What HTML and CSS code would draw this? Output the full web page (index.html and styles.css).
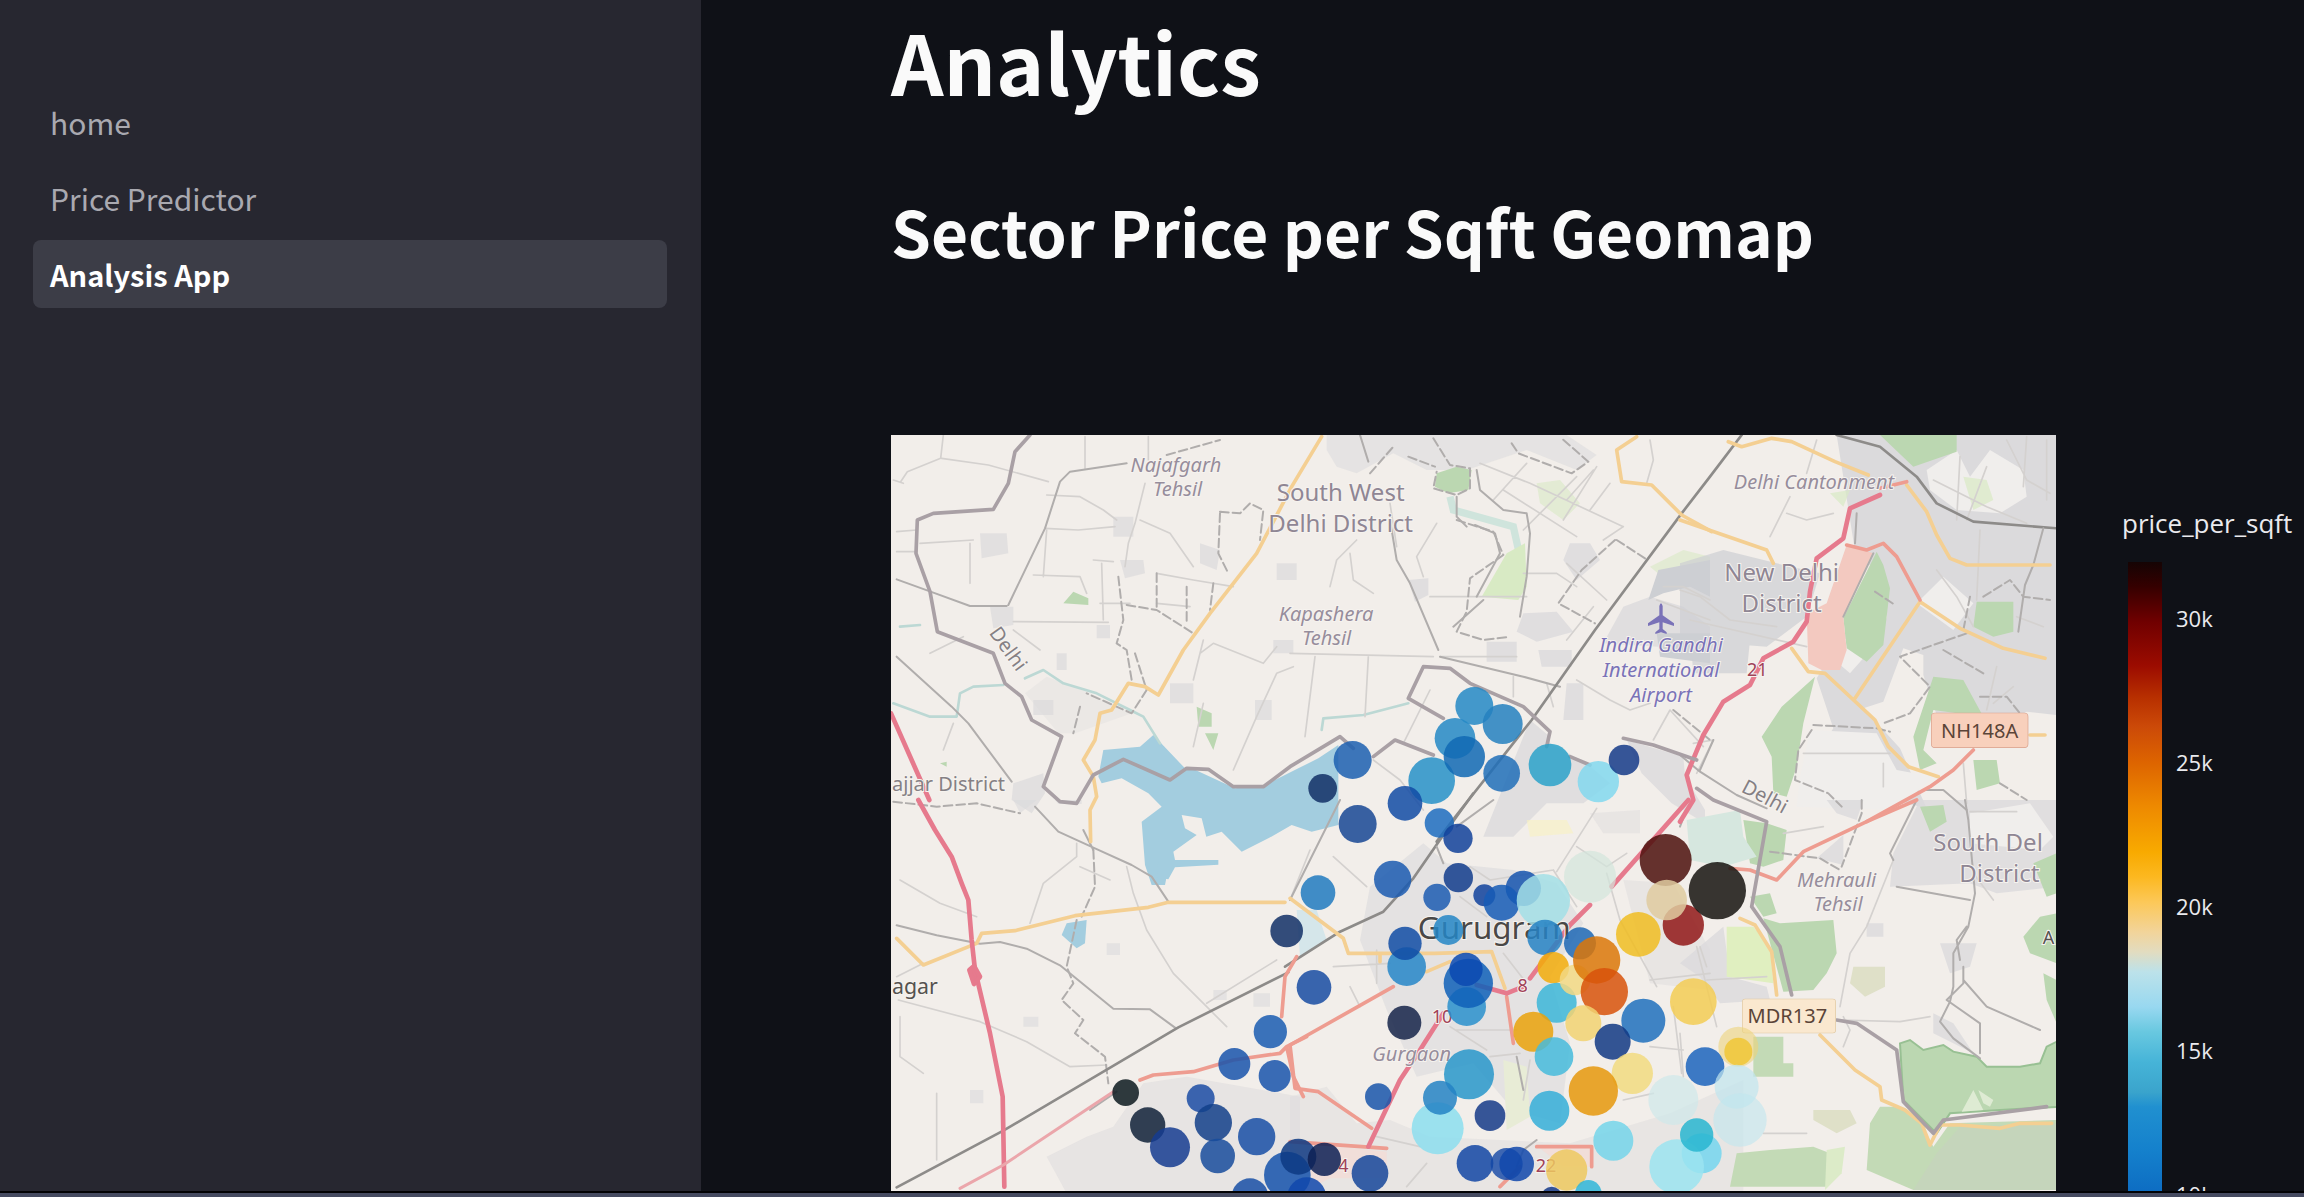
FILE: index.html
```html
<!DOCTYPE html>
<html lang="en">
<head>
<meta charset="utf-8">
<title>Analysis App</title>
<link rel="stylesheet" href="styles.css">
</head>
<body>
<div class="app">
  <nav class="sidebar">
    <a class="nav-link" href="#home">home</a>
    <a class="nav-link" href="#price">Price Predictor</a>
    <a class="nav-link active" href="#analysis" aria-current="page">Analysis App</a>
  </nav>
  <main class="main">
    <h1 class="title">Analytics</h1>
    <h2 class="subtitle">Sector Price per Sqft Geomap</h2>
    <section class="plot">
      <svg class="map" viewBox="0 0 3495 2268" role="img" aria-label="Sector price map of Gurugram">
        <rect width="3495" height="2268" fill="#f2eeea"/>
        <!-- land use: north west -->
        <g transform="translate(-33 -45)">
          <g class="urban">
            <path d="M300 340l80 0 5 60-80 15zM330 560h70v55l-60 10zM700 290h60v60h-60zM720 420l70 0 5 40-60 15zM960 370l60 20-10 60-50-20zM870 790h70v60h-70zM1180 660h60v40h-60zM1125 840h50v60h-50zM1190 430h60v50h-60zM530 700h30v50h-30zM650 615h40v40h-40zM460 840h60v45h-60zM400 1090l90-30 5 60-40 60-60-40z" opacity=".7"/>
            <path d="M500 770l120 45 135 65-170 60-50 0-100-120z" opacity=".3"/>
          </g>
          <path class="wood" d="M550 550l30-35 45 20v20zM950 860l45 20v40h-40zM975 940l40 0-15 50zM180 1030l20-5v15z"/>
          <path class="water" d="M670 990l110-10 40-35 95 100 20 0 130 60 90-10 100-50 60-30 60-40v240l-80 20-60-20-70 40-80 40-60-60-60 20-60 70-40 20-10 50-40 0-20-60-10-130 60-45-40-40-80-45-60 15-10-20z"/>
          <path class="stream" d="M435 775l55-25 60 40 100 30 100 50 40 20 50 80M370 795l-90 5-40 20-10 70-80 0-110-40M60 620l60-5"/>
        </g>
        <!-- land use: north centre -->
        <g transform="translate(1197 -45)">
          <g class="urban">
            <path d="M110 45h720l90 60-60 45-150-60-180 60-120 0-100-50-110 60-60-20-30-50z" opacity=".55"/>
            <path d="M840 370l60 0 30 50-70 60-40-60zM700 580l100-5 50 60-110 30-60-30zM590 665h90v60h-90zM745 690h100v50h-90zM830 790h50v110h-60zM355 480l60-5v50l-40 20zM720 900l60 50 0 20 110 60 70 60-80 60-110 0-100 100-90 0zM1010 960l170 50 5 60 60 100 0 40-100-60-90-90zM1000 560l80-30 100 30 80 60v70l-320-20z" opacity=".8"/>
          </g>
          <path d="M480 230l10 40 180 50 20 90-50 60" fill="none" stroke="#cfe4dc" stroke-width="22"/>
          <path class="grass" d="M650 400l55-30 5 130-25 40-110-10z"/>
          <path class="wood" d="M440 160l60-20 45 10-10 60-60 10-40-20z"/>
          <path class="grass" d="M740 190l70-10 60 70-50 50-70-50zM1080 440l100-50 80 20v30l-150 25z" opacity=".6"/>
          <path class="runway" d="M1075 540l30-90 155-30v110l-60-30-80 20zM1100 640h160v90l-150-20z"/>
          <path class="stream" d="M95 930l5-35 120-10 135-35"/>
        </g>
        <!-- land use: north east -->
        <g transform="translate(2367 -45)">
          <path class="urban" d="M470 45h660v840l-90-10-80 40-190-30-40-120 0-60-60-20-60 160-60 20 110 120 80 180-80-20-200-130-50-10 50-80-50-150 80-130 130-50-10-150-80-20z"/>
          <path class="runway" d="M0 430l130-40 160 40 130 30-40 130-120 90-260-20zM30 640l180 20-10 100-160 0z" opacity=".7"/>
          <path class="plain" d="M740 150l90-60 40 80 60-80 100 60 10 80-80 50-130-10-80-60zM790 470l90 80-60 80-110-80zM440 700l70 60 80-90-20-70zM390 930l200 10 60 110 110 20-110 100-300-10 10-90z"/>
          <path class="wood" d="M600 45h230v50l-130 45zM890 545h110v90l-60 15-60-30zM590 395l-100 200 10 90 60 40 50-50 20-170-20-70zM405 770l-100 90-60 90 30 60 5 110 40 10 30-90 20-130zM760 770l90 10 60 110-150-20-30 120 40 40-50 20-20-100zM880 1020l70 0 10 70-70 20z"/>
          <path class="grass" d="M450 220l60-10-20 50zM850 170l70 10 20 60-60 30z" opacity=".7"/>
          <path d="M500 375l80 25-90 190 10 100-20 60-55 0-40-20-5-150 60-30z" fill="#f3c9c0"/>
        </g>
        <!-- land use: south west -->
        <g transform="translate(-33 1095)">
          <path class="water" d="M560 370l60-10-5 70-25 15-45-40z"/>
          <path d="M905 45l60 10 15 60-30 30-60 60-10-50 70-50-35-20zM890 200l-5-20 140-60 10 50-10 60-140 40z" fill="#f2eeea"/>
          <path class="water" d="M835 180l180 0 0 14-130 8-20 36-35-5z"/>
          <g class="urban">
            <path d="M680 430h40v35h-40zM1000 570h40v30h-40zM1120 580h50v40h-50zM430 650h45v30h-45zM270 870h40v40h-40zM400 0h70l-50 40zM525 0h80v12h-70z" opacity=".6"/>
            <path d="M790 850l130-20 340 60v290H560l-60-110 120-60 80-30z" opacity=".5"/>
          </g>
        </g>
        <!-- land use: south centre -->
        <g transform="translate(1197 1095)">
          <g class="urban">
            <path d="M400 130l70 60 200 20 130 40 80 120-100 160 60 200-30 240-140-40-120-140-170 40-90-200-80-210 30-160z" opacity=".6"/>
            <path d="M0 890l110-30 90 110 100-10 120 50 420 20 300-90 220-100v340H0zM900 40l150-10v70h-110zM1000 240l150 10 110 200v120l-180-20z" opacity=".45"/>
          </g>
          <path d="M20 330l60 0 30 90-80 50z" fill="#d5e6ea"/>
          <path d="M710 60h120l20 40-130 10z" fill="#f8f1c0" opacity=".6"/>
          <path d="M0 1025l290 30v80H120l-40 20zM750 1045l150-5v60h-80z" fill="#f6d8d2" opacity=".6"/>
          <path d="M640 780l70 20 10 150-70 40z" fill="#e8ecd6"/>
        </g>
        <!-- land use: south east -->
        <g transform="translate(2367 1095)">
          <g class="urban">
            <path d="M720 0h410v260l-180 20-80-30-240 10 10-100zM440 0h110l-20 60-60-20zM410 175l80-70 0 90zM780 430h110l-20 70-60 20zM560 370h50v40h-50zM760 640l60 30 60 90-120-60zM0 490l130-110 20 150 110 30 10 40-150 10-60-80z" opacity=".8"/>
          </g>
          <path class="plain" d="M870 40l180-30 70 100-40 40-210-20z"/>
          <path class="wood" d="M190 60l70 10 60 20-10 90-60 20-40-10zM300 370l160-10 10 100-30 60-40 50-90 5-60-220zM210 290l60-10 20 60-40 10zM720 20l70-5 10 50-50 30zM1130 340l-50 10-50 60 20 50 80 30zM1130 160l-70 30 40 100 30-10zM1090 520l40 20v130l-30-70z"/>
          <path d="M170 1060l100-10 130-10 50 20-10 100H150zM600 920l60 0 70 60 30 60 50-70 320-10v210H700l-140-60 10-140zM220 710h90v80h30v40H220z" fill="#c3dab6"/>
          <path d="M840 980l290-10v200H700l70-110z" fill="#c5d5bb"/>
          <path d="M660 730l30-10 40 30 60-15 30 20 70 15 30 30 100 0 60-10 20-50 40-20v200l-180 10-150 10-40 60-50-50-50-50z" class="wood" stroke="#98c093" stroke-width="6"/>
          <path d="M845 935l35-65 30 60zM895 870l45 30-10 20-20-10z" fill="#deebd3"/>
          <path d="M140 380l80 0 50 60 10 110-140-20z" fill="#e0efc0"/>
          <path d="M520 500h95v60l-60 30-45-40zM400 930l110 0 20 40-60 30-70-40z" fill="#dfe0c8"/>
          <path d="M20 60l160-30 10 80 40 60-100 30-100-20z" fill="#d6e7df"/>
          <path d="M440 1050l55-10-10 80-50 50z" fill="#dcebc8"/>
        </g>

        <!-- minor roads -->
        <g class="minor">
          <g transform="translate(-33 -45)">
            <path d="M190 45l-8 70-100 40-20 30M185 115l140 20 180 50M615 50v95M805 50v70M795 190l-30 120-20 60-10 70M500 225l100 5 70 40 40 30M495 325l100 5 110-10M460 465l140 5 20 50M665 430l5 170M640 420l60 5M830 460l110 20 120 20M400 605l285 2M660 550l90 0M830 550l100 10M50 395l60 0M50 335l60-5M120 370l160-10M270 370v120M150 700l100-50M400 630l80 60M960 700l40-30 150 60 40-50M940 780l30-120M1060 1050l70-160 60-130 50-20M970 850l-30 130M780 300l90 40 70 100M500 330l-10 140M40 180l30 10M190 990l30-80"/>
          </g>
          <g transform="translate(1197 -45)">
            <path d="M420 530h290M0 700l430 10M75 710l-30 240M235 710l-10 180M300 250l20 130M180 400l10 80 60 40M120 500l20-80 60-60M400 470l-20-60 60-100M610 240l100-110M700 330l160-160M640 210l220 140M820 300l100-160M830 240l80-90M900 270l60-80M940 360l60-40M700 460h100l60 40M830 430l120 110M830 660l80-100M570 130l150 60 280 130M860 780l100 60 60 30 60-20M1090 960l50-90 100 110M340 970l80-160M250 1020l80 60 70 90M1100 540l160 60M1120 500l60 0 80 40M450 710l230 0M670 770v60M790 860l-20-70M1080 60l10 60-20 70"/>
          </g>
          <g transform="translate(2367 -45)">
            <path d="M0 510l60 20 90 70 140 20M30 600l350 80M320 280l60 20 80-20M410 60l-30 100M270 350l60-120M40 970l60-10-50 100M370 1000h260M610 1030v70M860 1150l-10-120M840 110l-10 190M920 140l-60 160M760 180l160 80 120 50M980 60l60 120 70 40M1040 50l-10 150M900 330l-10 210M770 450l60 80 50 90M1000 800l-60 50M1100 60v180M1090 620l-80-30M950 740l-30 130"/>
          </g>
          <g transform="translate(-33 1095)">
            <path d="M55 600l245 65 140 60 130 75 110-5M590 130l0 40-100 80-40 120M740 200l20 80 40 110 80 130 100 100 60 60M1190 480l-210 130M60 650v120l70 50M170 880v200M60 240l120 70 110 40M50 530l80-40M600 200l90 40"/>
          </g>
          <g transform="translate(1197 1095)">
            <path d="M60 150l-60 150M130 170l100 90M540 200l60 40 190-30M800 215l120-190M790 210l70 110M860 140l90 60 60-40M510 290l80 60M640 460l70 90M260 450v100M130 500l170-10M180 560l30 60M480 680l110 70M500 690l180 0M600 770l90-10M1080 540l180-20M1150 620l25 200M1000 900l90-20M1080 740l100 10M700 900l20-120M260 1010l130 30M1230 440l20 60M950 220l40 140 110 200M350 1160l60-70"/>
          </g>
          <g transform="translate(2367 1095)">
            <path d="M640 180l-80 200-50 80-30 160M480 660l180 5 90-15M50 440l60 240M80 540l180-10M250 1000h130M870 35h140M310 100l120-20M0 700l10 130M940 300l-60-80M490 650l20 40-20 50"/>
          </g>
        </g>
        <!-- grey through roads and railways -->
        <g class="grey">
          <g transform="translate(-33 -45)">
            <path d="M740 130l-170 25-30 30-45 140-110 230M50 478l110 40 110 40 110 0M50 710l165 150 50 50 130 175"/>
            <path class="dash" d="M860 105l160-45M715 470l15 130-20 70 30 20 15 90M740 555l90 15 110 70M920 500v110M830 460v100M765 700l35 110-45 70-135-60M600 860l-20 80M1000 490l-10 80M1020 280l-5 120 30 60M1020 275l60 5 30-30 40 20-10 90"/>
          </g>
          <g transform="translate(1197 -45)">
            <path d="M210 45l25 80M300 300l20 120 40 70 85 200M560 530l70-130-15-60-60-25M560 150l10 60 70 60 70 10 10 60-10 130-20 120M450 710l250 60 110 30M500 230l0 60 30 30M580 540l-90 80"/>
            <path class="dash" d="M240 160l70-80M355 110l80 30M430 55l50 80 60 10 0 60-40 20-70-20 10-50M665 70l20 30 160 60 50-35-80-70M500 300l110 35 30 70-100 70-10 100-30 60 80 25 80-10M975 360l-100 90-70 100 110 60M980 360l85 55M1150 870l110 90"/>
            <path class="rail" d="M1355 45l-95 125-85 110-260 350-190 270-75 95-150 190-60 80"/>
          </g>
          <g transform="translate(2367 -45)">
            <path class="rail" d="M470 45l130 35 110 90 60 80 110 55 250 20"/>
            <path d="M1090 325l-30 110-25 60-20 140M0 1005l60 50 110 70 90 40M490 590l90-190"/>
            <path class="dash" d="M400 915l190 10 40 10M395 930l-40 60-10 90 100 40 40 40M860 640l-200 70 90 90-60 80-80 30M585 515l60 40M910 530l80-50 40 50 80 10M850 630l20-100M960 1090l80 50M900 830l80 0 40 50M790 690l120 70"/>
            <path d="M60 1050l40-90M530 280l-5 90M730 1110l60 0 70 60"/>
          </g>
          <g transform="translate(-33 1095)">
            <path d="M50 376l120 30 130 25 60-5 80 20 100 50 160 130 110 2 75 55"/>
            <path d="M465 20l70 75 110 50 110 50 60 35 50 75M610 90l30 60"/>
            <path class="dash" d="M640 150l5 110-40 90M40 5l130 15 120-10 130 30M590 360l-30 140 20 50-35 50 65 60-25 40 90 70 10 80"/>
            <path class="rail" d="M50 1162l320-170 525-310 330-165"/>
            <path d="M630 930l80-55"/>
          </g>
          <g transform="translate(1197 1095)">
            <path class="rail" d="M-15 500l165-105 130-60 90-100 90-130 90-125"/>
            <path d="M610 0l-110 80M150 0l-150 300M440 140l20 50M680 1100l20-50 40-30M680 770l20 100"/>
          </g>
          <g transform="translate(2367 1095)">
            <path d="M855 0l10 60 20 220-20 100-45 80 0 100-10 45-30 60 40 50 80 60M850 500l0 50-50 50 100 70 0 90M850 540l70 80 160 70M870 300l-220-40M640 180l-10-20 80-160M860 380l-30 40 10 60"/>
            <path class="dash" d="M545 0v40l-60 160M0 80l15-40M270 155l150 20 60 35"/>
          </g>
        </g>
        <!-- orange, coral and red highways -->
        <g class="primary">
          <g transform="translate(-33 -45)">
            <path d="M1325 50L1235 200 1130 400 990 580 910 690 835 825 795 800 745 790 695 870 660 880 645 960 610 1020 640 1070 650 1130 630 1170 632 1265"/>
          </g>
          <g transform="translate(1197 -45)">
            <path d="M1040 50l-60 40 15 95 90 10 90 90 90 50"/>
          </g>
          <g transform="translate(2367 -45)">
            <path d="M145 65l40 15 90-25 60 10 130 60 100 40M0 300l260 90 20 40M680 195l60 80 30 70 40 70 50 20h250M335 685l50 70 50 5 150 140 40 80 60 60 90 30M525 835l195-290 120 80 130 60 125 30M1050 945h45"/>
          </g>
          <g transform="translate(-33 1095)">
            <path d="M50 415l80 80 160-65 15-30 100-8 180-45 220-25 60-15h350"/>
          </g>
          <g transform="translate(1197 1095)">
            <path d="M0 295l160 120 15 45 260 0 170-5 40 110M270 465v20M410 515l70-30"/>
          </g>
          <g transform="translate(2367 1095)">
            <path d="M180 355l45 20 50 80 15 130M420 705l105 105 75 50 5 40 70 30 50 40 25 65 30-60 60 0 120 10 60-15h95"/>
          </g>
        </g>
        <g class="trunk">
          <g transform="translate(2367 -45)"><path d="M500 375l60 15 50-20 40 40 70 130M880 990l-60 60-70 50-190 105M680 185l-80 20"/></g>
          <g transform="translate(2367 1095)"><path d="M710 0L560 65l-190 90-80 85-80-30-60-5"/></g>
          <g transform="translate(-33 1095)"><path d="M1250 470l-35 60-10 120M780 840l40-15 120-10 120-35 140-20 20-20 60-30M1220 740l20 90 30 60"/></g>
          <g transform="translate(1197 1095)"><path d="M310 560L0 735l15 130 70 10 160 110M650 590l20 140M740 1040h165v60M0 1025l290 20M690 1100l-60 60"/></g>
        </g>
        <g class="motor">
          <g transform="translate(-33 -45)"><path d="M33 880l115 260"/></g>
          <g transform="translate(-33 1095)"><path d="M115 0l50 90 50 80 30 80 20 50 10 120 10 90 45 190 38 190 5 270"/><path d="M268 510l14-12 18 32-18 22z" fill="#e67a8d"/></g>
          <g transform="translate(2367 -45)"><path d="M600 225l-90 40-20 90-80 60-20 100-10 90-40 60-90 50-40 80-80 50-60 100-50 120 20 75-40 65"/></g>
          <g transform="translate(1197 1095)"><path d="M1195 0L965 260M900 315l-60 60-60 80-60 80M700 560l-50 20-90-25M460 640l-70 110-60 90-95 200"/></g>
          <g transform="translate(-33 1095)"><path class="thin" d="M240 1165l130-70 120-80 150-100 60-40"/></g>
        </g>
        <!-- district boundary -->
        <g class="border">
          <g transform="translate(-33 -45)"><path d="M450 45l-45 50-20 95-45 78-180 12-48 20-4 100 42 115 22 120 168 65 35 90 50 40 30 70 90 50-55 150 50 45 50 5 50-85 90-47 140 62 50-35 65 3 75 52h90l80-60 150-90 40 35"/></g>
          <g transform="translate(1197 -45)"><path d="M250 1010l65-50 115 45M460 895l-105-60 45-95 80 5 60 45 160 70 80 75-10 45M840 1010l60 25M1000 955l90 20 130 45"/></g>
          <g transform="translate(2367 1095)"><path d="M50 -35L100 0l160 65-45 255 85 120 35 145M470 660l60 10 120 80 20 155 90 95 30-40 310-40"/></g>
        </g>

        <!-- place names -->
        <g class="labels">
          <g transform="translate(-33 -45)">
            <text class="it" x="888" y="155" font-size="60">Najafgarh</text>
            <text class="it" x="893" y="229" font-size="60">Tehsil</text>
            <text class="gr" x="0" y="0" font-size="60" transform="translate(368 698) rotate(54)">Delhi</text>
            <text class="gr start" x="36" y="1114" font-size="60">ajjar District</text>
          </g>
          <g transform="translate(1197 -45)">
            <text x="152" y="244" font-size="72">South West</text>
            <text x="152" y="336" font-size="72">Delhi District</text>
            <text class="it" x="108" y="602" font-size="60">Kapashera</text>
            <text class="it" x="110" y="674" font-size="60">Tehsil</text>
            <text class="air" x="1113" y="695" font-size="60">Indira Gandhi</text>
            <text class="air" x="1113" y="770" font-size="60">International</text>
            <text class="air" x="1113" y="845" font-size="60">Airport</text>
            <path d="M1108 558q5-16 10 0v28l34 24v8l-34-11v20l12 10v5l-17-5-17 5v-5l12-10v-20l-34 11v-8l34-24z" fill="#7a72b8"/>
          </g>
          <g transform="translate(2367 -45)">
            <text class="it" x="402" y="208" font-size="60">Delhi Cantonment</text>
            <text x="305" y="484" font-size="72">New Delhi</text>
            <text x="305" y="576" font-size="72">District</text>
            <text class="num" x="232" y="768" font-size="54">21</text>
            <text class="gr" x="0" y="0" font-size="60" transform="translate(245 1148) rotate(28)">Delhi</text>
            <rect x="755" y="880" width="288" height="102" rx="10" fill="#f8d0bc" stroke="#d9a08c" stroke-width="4"/>
            <text class="shield" x="899" y="954" font-size="60">NH148A</text>
          </g>
          <g transform="translate(-33 1095)">
            <text class="dark start" x="36" y="583" font-size="64">agar</text>
          </g>
          <g transform="translate(1197 1095)">
            <text class="city" x="613" y="418" font-size="94">Gurugram</text>
            <text class="num" x="698" y="576" font-size="54">8</text>
            <text class="num" x="456" y="668" font-size="54">10</text>
            <text class="it" x="365" y="784" font-size="60">Gurgaon</text>
            <text class="num" x="768" y="1115" font-size="54">22</text>
            <text class="num" x="160" y="1115" font-size="54">4</text>
          </g>
          <g transform="translate(2367 1095)">
            <text class="it" x="470" y="260" font-size="60">Mehrauli</text>
            <text class="it" x="474" y="332" font-size="60">Tehsil</text>
            <text class="start" x="760" y="154" font-size="72">South Del</text>
            <text x="958" y="246" font-size="72">District</text>
            <text class="dark start" x="1088" y="432" font-size="54">A</text>
            <rect x="188" y="598" width="278" height="100" rx="8" fill="#fae8cf" stroke="#dfc8a0" stroke-width="4"/>
            <text class="shield" x="322" y="669" font-size="60">MDR137</text>
          </g>
        </g>

        <!-- sectors -->
        <g class="dots">
          <g transform="translate(1197 -45)">
            <circle cx="188" cy="1020" r="57" fill="#1c5fb0"/><circle cx="98" cy="1105" r="43" fill="#122f66"/>
            <circle cx="553" cy="858" r="57" fill="#2488c5"/><circle cx="638" cy="912" r="60" fill="#2480c0"/>
            <circle cx="495" cy="955" r="61" fill="#2488c5"/><circle cx="425" cy="1082" r="70" fill="#2790c8"/>
            <circle cx="523" cy="1010" r="62" fill="#1068b4"/><circle cx="635" cy="1060" r="55" fill="#206fb8"/>
            <circle cx="780" cy="1035" r="64" fill="#2aa2ca"/><circle cx="925" cy="1085" r="62" fill="#82d8ee"/>
            <circle cx="1002" cy="1020" r="46" fill="#153a88"/>
          </g>
          <g transform="translate(1197 1095)">
            <circle cx="900" cy="230" r="78" fill="#d3e6dc" fill-opacity=".7"/><circle cx="345" cy="10" r="52" fill="#124ba5"/>
            <circle cx="448" cy="69" r="44" fill="#1d6cc0"/><circle cx="504" cy="115" r="44" fill="#12419a"/>
            <circle cx="203" cy="72" r="57" fill="#184694"/><circle cx="308" cy="238" r="56" fill="#1b5bb0"/>
            <circle cx="84" cy="278" r="52" fill="#217ac0"/><circle cx="505" cy="233" r="44" fill="#123c8c"/>
            <circle cx="441" cy="292" r="41" fill="#1c5cb2"/><circle cx="583" cy="286" r="33" fill="#10429c"/>
            <circle cx="700" cy="265" r="53" fill="#1554ae"/><circle cx="635" cy="308" r="54" fill="#165cb6"/>
            <circle cx="760" cy="302" r="80" fill="#a3dfe6" fill-opacity=".85"/>
            <circle cx="475" cy="390" r="45" fill="#2486c5"/><circle cx="765" cy="412" r="53" fill="#2683c4"/>
            <circle cx="870" cy="430" r="48" fill="#1d67b5"/><circle cx="-10" cy="393" r="49" fill="#122f66"/>
            <circle cx="350" cy="500" r="58" fill="#2686c8"/><circle cx="345" cy="430" r="50" fill="#104ca5"/>
            <circle cx="530" cy="620" r="58" fill="#2a90cc"/><circle cx="535" cy="550" r="74" fill="#0f60b8"/>
            <circle cx="528" cy="508" r="50" fill="#0a49b0"/><circle cx="72" cy="562" r="52" fill="#174ba2"/>
            <circle cx="343" cy="668" r="51" fill="#152349"/><circle cx="1127" cy="180" r="78" fill="#4c0f0c"/>
            <circle cx="1180" cy="375" r="62" fill="#911817"/><circle cx="1130" cy="300" r="61" fill="#dfcba0"/>
            <circle cx="1282" cy="272" r="86" fill="#16130f"/><circle cx="1045" cy="403" r="67" fill="#f0bd22"/>
            <circle cx="790" cy="503" r="47" fill="#f2ac0b"/><circle cx="800" cy="608" r="60" fill="#3cb6d8"/>
            <circle cx="855" cy="540" r="46" fill="#f2d884"/><circle cx="920" cy="480" r="71" fill="#dc7708"/>
            <circle cx="943" cy="575" r="71" fill="#d8520a"/><circle cx="730" cy="695" r="60" fill="#eaa20a"/>
            <circle cx="880" cy="670" r="54" fill="#f2d272"/><circle cx="792" cy="770" r="58" fill="#46bbdc"/>
            <circle cx="1060" cy="662" r="66" fill="#2070bd"/><circle cx="968" cy="725" r="54" fill="#123884"/>
            <circle cx="1210" cy="605" r="70" fill="#f3cd55"/><circle cx="1245" cy="800" r="58" fill="#1c64bd"/>
            <circle cx="1345" cy="740" r="60" fill="#edd47c" fill-opacity=".6"/><circle cx="1345" cy="755" r="42" fill="#f0c736"/>
            <circle cx="1027" cy="820" r="62" fill="#f2da80"/><circle cx="910" cy="873" r="74" fill="#e6980c"/>
            <circle cx="778" cy="932" r="60" fill="#35aed8"/><circle cx="537" cy="823" r="75" fill="#2896ca"/>
            <circle cx="443" cy="985" r="78" fill="#8cdeee"/><circle cx="450" cy="893" r="51" fill="#2483c4"/>
            <circle cx="600" cy="947" r="46" fill="#153a88"/><circle cx="265" cy="890" r="40" fill="#1955aa"/>
            <circle cx="1150" cy="900" r="75" fill="#cfe8ea" fill-opacity=".7"/><circle cx="1340" cy="860" r="66" fill="#c0e6ee" fill-opacity=".7"/>
            <circle cx="1350" cy="960" r="80" fill="#c0e6ee" fill-opacity=".6"/>
            <circle cx="1235" cy="1060" r="60" fill="#74d6ee"/><circle cx="1160" cy="1100" r="82" fill="#9be4f0"/>
            <circle cx="1220" cy="1005" r="50" fill="#28b6d0"/><circle cx="970" cy="1022" r="60" fill="#74d5ea"/>
            <circle cx="555" cy="1090" r="55" fill="#1246a5"/><circle cx="650" cy="1092" r="48" fill="#1246a5" fill-opacity=".8"/>
            <circle cx="680" cy="1092" r="52" fill="#1048ac"/><circle cx="240" cy="1120" r="55" fill="#15469a"/>
            <circle cx="830" cy="1110" r="62" fill="#edc95f"/><circle cx="895" cy="1180" r="40" fill="#2fb6d8"/>
            <circle cx="785" cy="1190" r="30" fill="#153a88"/>
          </g>
          <g transform="translate(-33 1095)">
            <circle cx="1171" cy="695" r="50" fill="#1a5cb2"/><circle cx="1063" cy="792" r="48" fill="#1953ab"/>
            <circle cx="1184" cy="828" r="48" fill="#1953ab"/><circle cx="737" cy="878" r="40" fill="#0c191f"/>
            <circle cx="803" cy="975" r="53" fill="#0f2138"/><circle cx="870" cy="1042" r="60" fill="#153c90"/>
            <circle cx="962" cy="895" r="42" fill="#1b4ca5"/><circle cx="1000" cy="968" r="56" fill="#123f8a"/>
            <circle cx="1130" cy="1010" r="56" fill="#174fa6"/><circle cx="1013" cy="1068" r="52" fill="#174c9c"/>
            <circle cx="1222" cy="1125" r="70" fill="#1452ac"/><circle cx="1255" cy="1070" r="54" fill="#0d3a82"/>
            <circle cx="1333" cy="1078" r="50" fill="#0d2054"/><circle cx="1110" cy="1190" r="55" fill="#174fa6"/>
            <circle cx="1280" cy="1190" r="58" fill="#1048ac"/>
          </g>
        </g>
      </svg>
      <aside class="legend">
        <p class="legend-title">price_per_sqft</p>
        <div class="scale">
          <div class="bar"></div>
          <ul class="ticks"><li>30k</li><li>25k</li><li>20k</li><li>15k</li><li>10k</li></ul>
        </div>
      </aside>
    </section>
  </main>
</div>
<footer class="edge"></footer>
</body>
</html>
```

FILE: styles.css
```css
* { box-sizing: border-box; }

body {
  margin: 0;
  min-height: 100vh;
  display: flex;
  flex-direction: column;
  background: #0f1117;
  color: #fafafa;
  font-family: "Noto Sans CJK SC", "Noto Sans", sans-serif;
}

.app {
  flex: 1;
  display: grid;
  grid-template-columns: 701px minmax(0, 1fr);
}

.sidebar {
  display: flex;
  flex-direction: column;
  gap: 8px;
  padding: 88px 34px 0 33px;
  background: #272730;
}

.nav-link {
  padding: 0 17px;
  border-radius: 8px;
  color: #a9a9b0;
  font-size: 30px;
  line-height: 68px;
  text-decoration: none;
}

.nav-link.active {
  background: #3c3d47;
  color: #fff;
  font-size: 29px;
  font-weight: 700;
}

.main { padding-left: 190px; }

.title,
.subtitle { margin: 0; font-weight: 700; }

.title {
  padding: 4px 0 0;
  font-size: 82px;
  line-height: 114px;
}

.subtitle {
  padding: 62px 0 0;
  font-size: 64px;
  line-height: 100px;
}

.plot {
  display: grid;
  grid-template-columns: minmax(0, 1fr) 248px;
  margin-top: 155px;
}

.map { display: block; width: 100%; }

.urban { fill: #dbdadc; }
.plain { fill: #f0eeec; }
.wood { fill: #bbd7b1; }
.grass { fill: #d8eac4; }
.water { fill: #a3cddf; }
.runway { fill: #cdcfd3; }

.stream, .minor, .grey, .primary, .trunk, .motor, .border {
  fill: none;
  stroke-linejoin: round;
  stroke-linecap: round;
}

.stream { stroke: #bcd8d4; stroke-width: 8; }
.minor { stroke: #d4d1cf; stroke-width: 5; }
.grey { stroke: #b0adac; stroke-width: 6; }
.dash { stroke-dasharray: 26 12; }
.rail { stroke: #8d8b89; stroke-width: 8; }
.primary { stroke: #f4cf92; stroke-width: 11; }
.trunk { stroke: #ee9c90; stroke-width: 11; }
.motor { stroke: #e67a8d; stroke-width: 14; }
.thin { stroke: #eba6ab; stroke-width: 9; }
.border { stroke: #a9a0a5; stroke-width: 11; }

.labels {
  fill: #8f8694;
  stroke: #f6f3ef;
  stroke-width: 6;
  paint-order: stroke;
  font-family: "Noto Sans", sans-serif;
  text-anchor: middle;
}

.labels path { stroke: none; }

.it { fill: #968d9c; font-style: italic; }
.air { fill: #7a72b8; font-style: italic; }
.gr { fill: #858084; }
.dark { fill: #55524f; }
.city { fill: #4a4847; }
.num { fill: #a04258; }
.shield { fill: #5b4438; stroke: none; }
.start { text-anchor: start; }

.dots { fill-opacity: .85; }

.legend {
  contain: size;
  overflow: hidden;
  padding: 72px 0 0 66px;
  font-family: "Open Sans", sans-serif;
  color: #eaeaee;
}

.legend-title {
  margin: 0;
  font-size: 26px;
  line-height: 32px;
}

.scale {
  display: flex;
  gap: 14px;
  padding: 23px 0 0 6px;
}

.bar {
  width: 34px;
  height: 720px;
  background: linear-gradient(#150404 0, #340000 24px, #700000 60px, #9c0c00 104px, #b83000 136px, #cc4a08 165px, #dd6400 200px, #ee8a00 245px, #f8aa00 290px, #fcb820 315px, #fcc858 340px, #f2d49a 370px, #e2dcc0 390px, #bce2ea 410px, #98d8f0 445px, #68c8e0 470px, #46b4d8 500px, #3aa4cc 530px, #2090d0 545px, #1480cc 590px, #0c68c0 640px, #0c3c90 690px, #10204c 720px);
}

.ticks {
  margin: 0;
  padding: 40px 0 0;
  list-style: none;
  font-size: 22px;
  line-height: 32px;
}

.ticks li { height: 144px; }

.edge {
  height: 6px;
  border-top: 2px solid #020204;
  background: #454a60;
}
```
